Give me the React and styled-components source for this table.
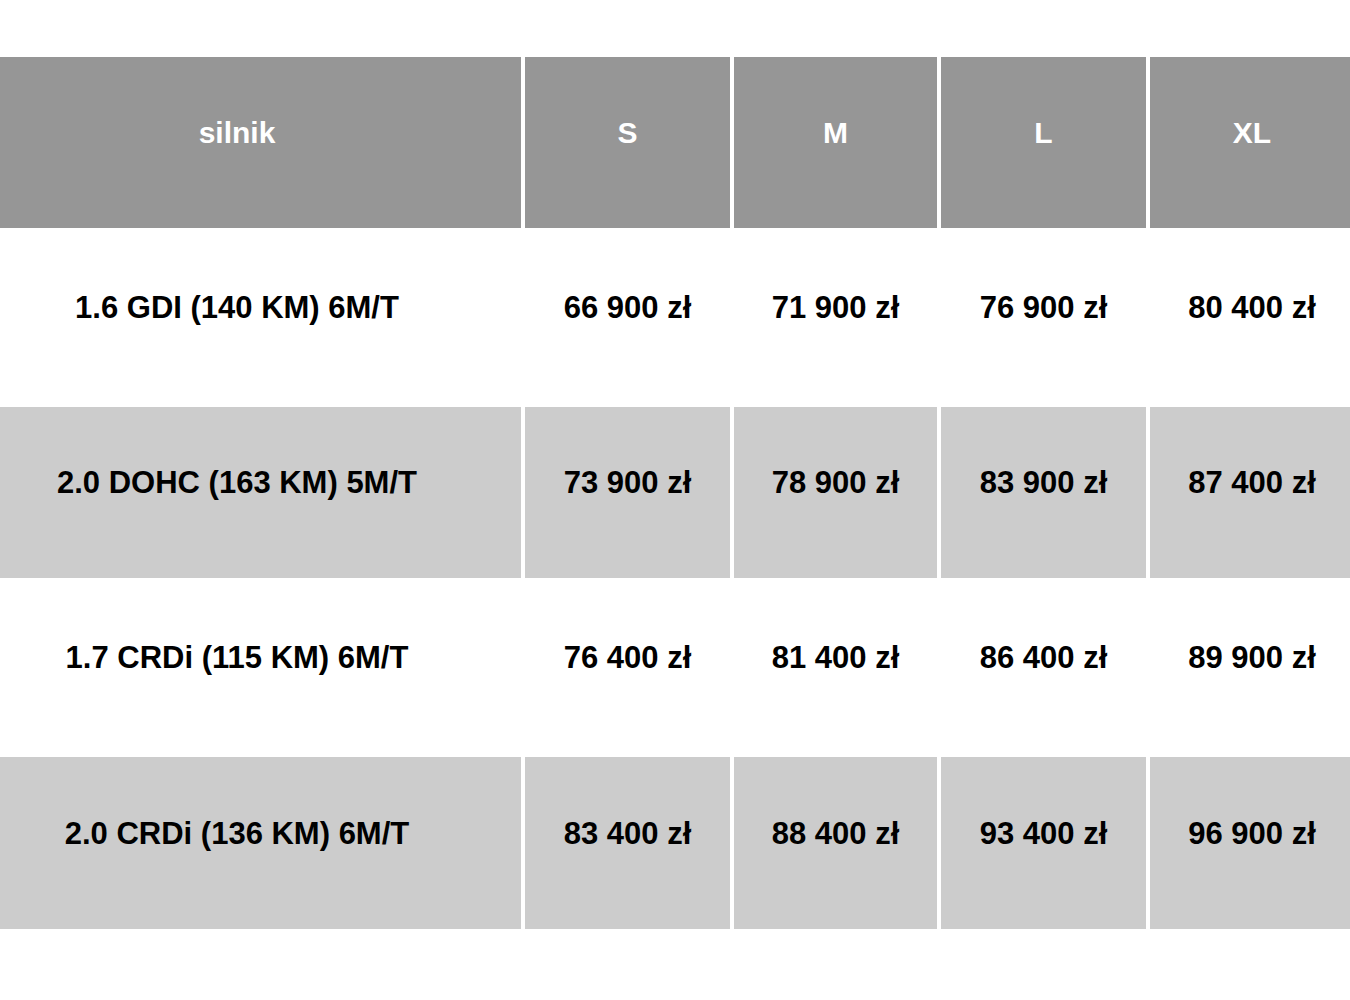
import React from "react";
import styled, { createGlobalStyle } from "styled-components";

const Global = createGlobalStyle`
  html, body { margin: 0; padding: 0; background: #ffffff; }
  body { font-family: "Liberation Sans", Arial, sans-serif; }
`;

const Page = styled.div`
  padding-top: 57px;
  width: 1350px;
`;

const Table = styled.div`
  display: grid;
  grid-template-columns: 521px 205px 203px 205px 1fr;
  grid-template-rows: 171px 171px 171px 171px 172px;
  column-gap: 4px;
  row-gap: 4px;
`;

const Cell = styled.div`
  display: flex;
  align-items: center;
  justify-content: center;
  padding-bottom: 19px;
  padding-right: ${(p) => (p.$col === 0 ? "47px" : "0")};
  padding-left: ${(p) => (p.$col === 4 ? "4px" : "0")};
  box-sizing: border-box;
  font-weight: 700;
  font-size: ${(p) => (p.$head ? "30px" : "31px")};
  color: ${(p) => (p.$head ? "#ffffff" : "#000000")};
  background: ${(p) =>
    p.$head ? "#969696" : p.$shade ? "#cccccc" : "#ffffff"};
  white-space: nowrap;
`;

const head = ["silnik", "S", "M", "L", "XL"];
const rows = [
  ["1.6 GDI (140 KM) 6M/T", "66 900 zł", "71 900 zł", "76 900 zł", "80 400 zł"],
  ["2.0 DOHC (163 KM) 5M/T", "73 900 zł", "78 900 zł", "83 900 zł", "87 400 zł"],
  ["1.7 CRDi (115 KM) 6M/T", "76 400 zł", "81 400 zł", "86 400 zł", "89 900 zł"],
  ["2.0 CRDi (136 KM) 6M/T", "83 400 zł", "88 400 zł", "93 400 zł", "96 900 zł"],
];

export default function App() {
  return (
    <Page>
      <Global />
      <Table>
        {head.map((h, j) => (
          <Cell key={h} $head $col={j}>
            {h}
          </Cell>
        ))}
        {rows.map((r, i) =>
          r.map((c, j) => (
            <Cell key={i + "-" + j} $col={j} $shade={i % 2 === 1}>
              {c}
            </Cell>
          ))
        )}
      </Table>
    </Page>
  );
}
